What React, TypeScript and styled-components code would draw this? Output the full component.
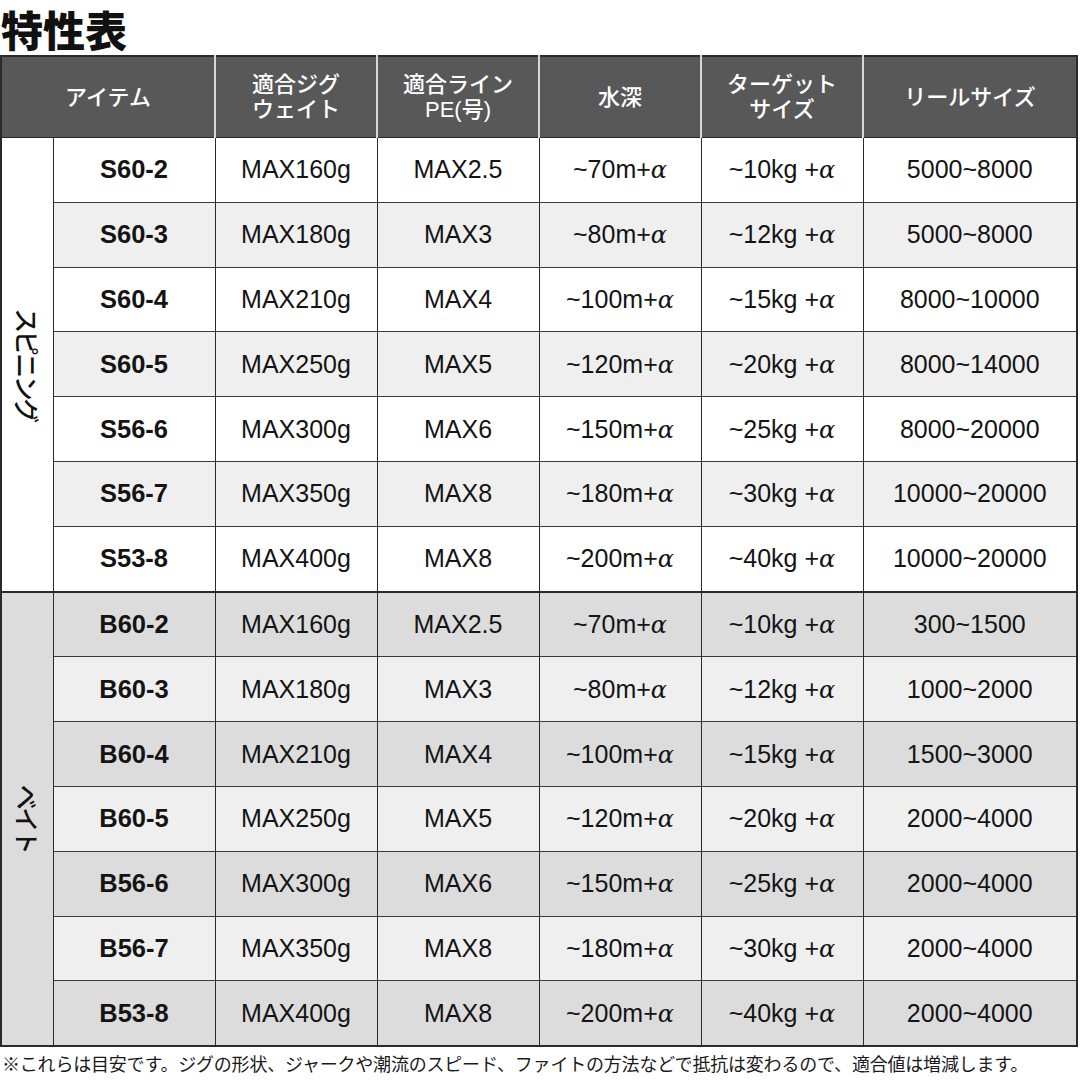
import { FC } from 'react'
import styled, { createGlobalStyle } from 'styled-components'

const GlobalStyle = createGlobalStyle`
  body {
    margin: 0;
    background: #fff;
    font-family: "Liberation Sans", "Noto Sans CJK JP", sans-serif;
    color: #1a1a1a;
  }
`

type Row = {
  item: string
  jig: string
  line: string
  depth: string
  target: string
  reel: string
}

const spinning: Row[] = [
  { item: 'S60-2', jig: 'MAX160g', line: 'MAX2.5', depth: '~70m+', target: '~10kg +', reel: '5000~8000' },
  { item: 'S60-3', jig: 'MAX180g', line: 'MAX3', depth: '~80m+', target: '~12kg +', reel: '5000~8000' },
  { item: 'S60-4', jig: 'MAX210g', line: 'MAX4', depth: '~100m+', target: '~15kg +', reel: '8000~10000' },
  { item: 'S60-5', jig: 'MAX250g', line: 'MAX5', depth: '~120m+', target: '~20kg +', reel: '8000~14000' },
  { item: 'S56-6', jig: 'MAX300g', line: 'MAX6', depth: '~150m+', target: '~25kg +', reel: '8000~20000' },
  { item: 'S56-7', jig: 'MAX350g', line: 'MAX8', depth: '~180m+', target: '~30kg +', reel: '10000~20000' },
  { item: 'S53-8', jig: 'MAX400g', line: 'MAX8', depth: '~200m+', target: '~40kg +', reel: '10000~20000' },
]

const bait: Row[] = [
  { item: 'B60-2', jig: 'MAX160g', line: 'MAX2.5', depth: '~70m+', target: '~10kg +', reel: '300~1500' },
  { item: 'B60-3', jig: 'MAX180g', line: 'MAX3', depth: '~80m+', target: '~12kg +', reel: '1000~2000' },
  { item: 'B60-4', jig: 'MAX210g', line: 'MAX4', depth: '~100m+', target: '~15kg +', reel: '1500~3000' },
  { item: 'B60-5', jig: 'MAX250g', line: 'MAX5', depth: '~120m+', target: '~20kg +', reel: '2000~4000' },
  { item: 'B56-6', jig: 'MAX300g', line: 'MAX6', depth: '~150m+', target: '~25kg +', reel: '2000~4000' },
  { item: 'B56-7', jig: 'MAX350g', line: 'MAX8', depth: '~180m+', target: '~30kg +', reel: '2000~4000' },
  { item: 'B53-8', jig: 'MAX400g', line: 'MAX8', depth: '~200m+', target: '~40kg +', reel: '2000~4000' },
]

const Page = styled.div`
  width: 1080px;
`

const Title = styled.h1`
  margin: 0;
  padding: 3px 0 0 1px;
  font-family: "Noto Sans CJK JP", sans-serif;
  font-weight: 900;
  font-size: 42px;
  line-height: 52px;
  color: #111;
`

const Table = styled.table`
  width: 1078px;
  table-layout: fixed;
  border-collapse: collapse;
  border: 2px solid #2a2a2a;
`

const HeadCell = styled.th`
  height: 80px;
  padding: 0;
  background: #585858;
  color: #fff;
  font-family: "Liberation Sans", "Noto Sans CJK JP", sans-serif;
  font-weight: 500;
  font-size: 22px;
  line-height: 25px;
  text-align: center;
  border-left: 2px solid #d8d8d8;
  border-bottom: 1px solid #2a2a2a;
  &:first-child {
    border-left: none;
  }
`

const GroupCell = styled.td<{ $shade: string; $split?: boolean }>`
  padding: 0;
  background: ${p => p.$shade};
  border-right: 1.5px solid #2a2a2a;
  border-top: ${p => (p.$split ? '2.5px solid #2a2a2a' : 'none')};
  text-align: center;
  vertical-align: middle;
  overflow: visible;
`

const GroupWrap = styled.div`
  display: flex;
  justify-content: center;
  align-items: center;
  width: 100%;
`

const GroupLabel = styled.span`
  flex: none;
  white-space: nowrap;
  transform: rotate(90deg);
  font-family: "Noto Sans CJK JP", sans-serif;
  font-size: 25px;
  letter-spacing: -2.5px;
  line-height: 25px;
  font-weight: 500;
  color: #111;
`

const BodyRow = styled.tr<{ $shade: string; $split?: boolean }>`
  background: ${p => p.$shade};
  & > td {
    border-top: ${p => (p.$split ? '2.5px solid #2a2a2a' : '1px solid #3a3a3a')};
  }
`

const Cell = styled.td<{ $bold?: boolean }>`
  height: 63.8px;
  padding: 0;
  text-align: center;
  vertical-align: middle;
  font-size: ${p => (p.$bold ? 25.5 : 25)}px;
  font-weight: ${p => (p.$bold ? 700 : 400)};
  color: #141414;
  border-left: 1.5px solid #2a2a2a;
  white-space: nowrap;
`

const Alpha = styled.span`
  font-family: "DejaVu Serif", serif;
  font-style: italic;
  font-size: 24px;
`

const Note = styled.p`
  margin: 4px 0 0 2px;
  font-family: "Noto Sans CJK JP", sans-serif;
  font-size: 18px;
  letter-spacing: -0.2px;
  line-height: 24px;
  color: #1a1a1a;
  white-space: nowrap;
`

const WithAlpha: FC<{ text: string }> = ({ text }) => (
  <>
    {text}
    <Alpha>α</Alpha>
  </>
)

const Section: FC<{ label: string; rows: Row[]; bait?: boolean }> = ({ label, rows, bait }) => (
  <>
    {rows.map((r, i) => {
      const shade = bait
        ? i % 2 === 0 ? '#dcdcdc' : '#efefef'
        : i % 2 === 0 ? '#ffffff' : '#efefef'
      const split = bait && i === 0
      return (
        <BodyRow key={r.item} $shade={shade} $split={split}>
          {i === 0 && (
            <GroupCell rowSpan={rows.length} $shade={bait ? '#dcdcdc' : '#ffffff'} $split={split}>
              <GroupWrap>
                <GroupLabel>{label}</GroupLabel>
              </GroupWrap>
            </GroupCell>
          )}
          <Cell $bold>{r.item}</Cell>
          <Cell>{r.jig}</Cell>
          <Cell>{r.line}</Cell>
          <Cell><WithAlpha text={r.depth} /></Cell>
          <Cell><WithAlpha text={r.target} /></Cell>
          <Cell>{r.reel}</Cell>
        </BodyRow>
      )
    })}
  </>
)

export default function App() {
  return (
    <Page>
      <GlobalStyle />
      <Title>特性表</Title>
      <Table>
        <colgroup>
          <col style={{ width: 52 }} />
          <col style={{ width: 162 }} />
          <col style={{ width: 162 }} />
          <col style={{ width: 162 }} />
          <col style={{ width: 162 }} />
          <col style={{ width: 162 }} />
          <col />
        </colgroup>
        <thead>
          <tr>
            <HeadCell colSpan={2}>アイテム</HeadCell>
            <HeadCell>適合ジグ<br />ウェイト</HeadCell>
            <HeadCell>適合ライン<br />PE(号)</HeadCell>
            <HeadCell>水深</HeadCell>
            <HeadCell>ターゲット<br />サイズ</HeadCell>
            <HeadCell>リールサイズ</HeadCell>
          </tr>
        </thead>
        <tbody>
          <Section label="スピニング" rows={spinning} />
          <Section label="ベイト" rows={bait} bait />
        </tbody>
      </Table>
      <Note>※これらは目安です。ジグの形状、ジャークや潮流のスピード、ファイトの方法などで抵抗は変わるので、適合値は増減します。</Note>
    </Page>
  )
}
